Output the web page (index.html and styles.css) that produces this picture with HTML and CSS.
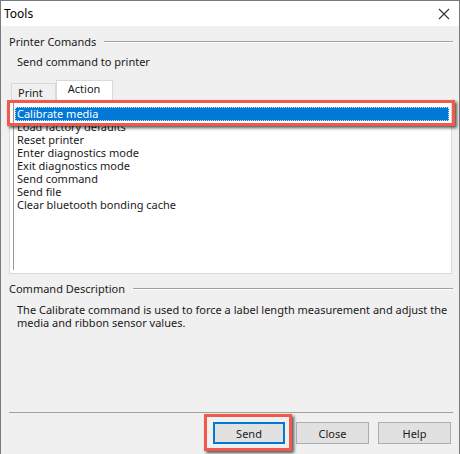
FILE: index.html
```html
<!DOCTYPE html>
<html lang="en">
<head>
    <meta charset="UTF-8">
    <title>Tools</title>
    <link rel="stylesheet" href="styles.css">
</head>
<body>

    <!-- Dialog window -->
    <div class="window">
        <div class="titlebar">
            <span class="title">Tools</span>
            <svg class="close" width="12" height="12" viewBox="0 0 12 12">
                <path d="M1 1 L11 11 M11 1 L1 11" stroke="#333" stroke-width="1.1" fill="none"/>
            </svg>
        </div>

        <div class="content">
            <div class="group-head">
                <span>Printer Comands</span>
                <div class="rule"></div>
            </div>
            <p class="note">Send command to printer</p>

            <!-- Tabs -->
            <div class="tabs">
                <div class="tab">Print</div>
                <div class="tab active">Action</div>
            </div>
            <div class="tab-panel">
                <ul class="listbox">
                    <li class="selected"><span>Calibrate media</span></li>
                    <li>Load factory defaults</li>
                    <li>Reset printer</li>
                    <li>Enter diagnostics mode</li>
                    <li>Exit diagnostics mode</li>
                    <li>Send command</li>
                    <li>Send file</li>
                    <li>Clear bluetooth bonding cache</li>
                </ul>
            </div>

            <div class="group-head desc-head">
                <span>Command Description</span>
                <div class="rule"></div>
            </div>
            <p class="note desc">The Calibrate command is used to force a label length measurement and adjust the media and ribbon sensor values.</p>

            <div class="spacer"></div>

            <div class="footer">
                <button class="btn focused marked">Send</button>
                <button class="btn">Close</button>
                <button class="btn">Help</button>
            </div>
        </div>
    </div>

</body>
</html>
```

FILE: styles.css
```css
* {
    margin: 0;
    padding: 0;
    box-sizing: border-box;
}

body {
    font-family: 'Noto Sans', sans-serif;
    font-size: 11px;
    color: #1a1a1a;
    background: #f0f0f0;
}

.window {
    width: 460px;
    height: 454px;
    border: 1px solid #7a7a7a;
    border-bottom: none;
    display: flex;
    flex-direction: column;
    background: #f0f0f0;
}

.titlebar {
    height: 25px;
    background: #fff;
    display: flex;
    align-items: center;
    justify-content: space-between;
    padding: 0 9px 0 3px;
}

.titlebar .title {
    font-size: 12px;
    color: #000;
}

.content {
    flex: 1;
    display: flex;
    flex-direction: column;
    padding: 8px 6px 0 8px;
}

.group-head {
    display: flex;
    align-items: center;
    gap: 8px;
    height: 15px;
}

.group-head .rule {
    flex: 1;
    height: 2px;
    background: #a0a0a0;
    border-bottom: 1px solid #fff;
}

.note {
    padding-left: 8px;
    margin-top: 6px;
    line-height: 13px;
}

/* Tabs */
.tabs {
    display: flex;
    align-items: flex-end;
    margin-top: 12px;
    padding-left: 2px;
    height: 20px;
}

.tab {
    height: 17px;
    padding: 0 12px 0 6px;
    border: 1px solid #d9d9d9;
    border-bottom: none;
    background: #f0f0f0;
    line-height: 17px;
}

.tab.active {
    height: 20px;
    padding: 0 12px 0 11px;
    background: #fff;
    line-height: 16px;
}

.tab-panel {
    height: 174px;
    background: #fff;
    border: 1px solid #d9d9d9;
    margin-right: 1px;
    padding: 2px 1px 3px 3px;
}

.listbox {
    list-style: none;
    height: 100%;
    border-left: 1px solid #9a9a9a;
    padding: 4px 1px 0 1px;
}

.listbox li {
    height: 13px;
    line-height: 13px;
    padding-left: 2px;
    white-space: nowrap;
}

.listbox li.selected {
    position: relative;
    height: 14px;
    line-height: 14px;
    margin-bottom: -1px;
    background: #0078d7;
    color: #fff;
    outline: 1px dotted #cfe3f5;
    outline-offset: -1px;
    z-index: 1;
}

/* red annotation boxes */
.listbox li.selected::after,
.btn.marked::after {
    content: "";
    position: absolute;
    border: 3px solid #f15a4b;
    box-shadow: 2px 2px 3px rgba(0, 0, 0, 0.65);
}

.listbox li.selected::after {
    top: -7px;
    bottom: -5px;
    left: -8px;
    right: -6px;
}

.desc-head {
    margin-top: 7px;
}

.desc {
    margin-top: 7px;
}

.spacer {
    flex: 1;
}

.footer {
    border-top: 1px solid #a0a0a0;
    display: flex;
    justify-content: flex-end;
    gap: 9px;
    padding: 9px 2px 10px 0;
}

.btn {
    position: relative;
    width: 73px;
    height: 22px;
    font-family: 'Noto Sans', sans-serif;
    font-size: 11px;
    color: #1a1a1a;
    background: #e1e1e1;
    border: 1px solid #adadad;
}

.btn.focused {
    width: 72px;
    margin-right: 2px;
    border: 2px solid #0078d7;
}

.btn.marked::after {
    top: -10px;
    bottom: -9px;
    left: -11px;
    right: -9px;
}
```
